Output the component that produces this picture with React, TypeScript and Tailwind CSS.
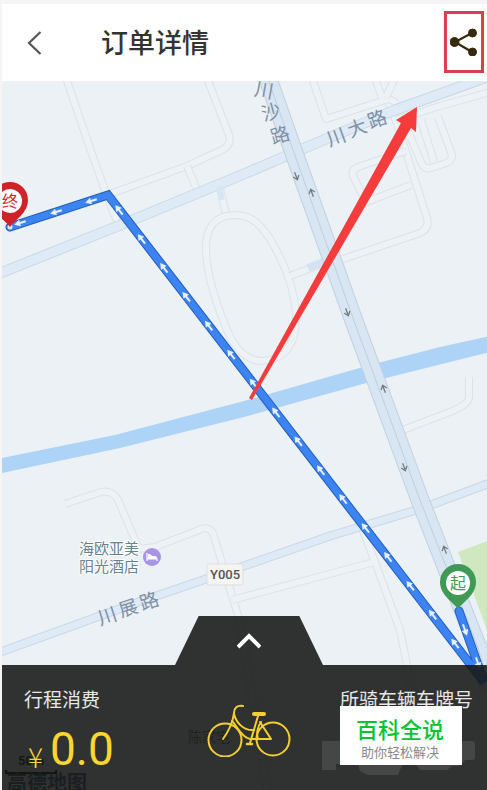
// src/App.tsx
import React from "react";

const MAP_FONT = '"Noto Sans CJK SC", sans-serif';

type RoadProps = { d: string; width: number; fill: string; edge: string };

// outlined road: edge stroke below, fill stroke on top
function Road({ d, width, fill, edge }: RoadProps) {
  return (
    <g fill="none" strokeLinejoin="round">
      <path d={d} stroke={edge} strokeWidth={width} />
      <path d={d} stroke={fill} strokeWidth={width - 2} />
    </g>
  );
}

const minorRoads = [
  "M66 78 L92 154 L107 196 L118 224",
  "M207 78 L229 135 Q232 145 222 150 L187 166 L110 194",
  "M187 166 L198 192",
  "M219 184 L226 214",
  "M235 215 C215 215 206 228 206 248 C206 275 217 305 225 325 C232 345 245 361 262 361 C284 360 297 345 296 315 C294 275 270 235 257 223 C250 217 243 215 235 215 Z",
  "M290 276 L322 264",
  "M340 260 L420 233 Q430 228 427 218 L397 124 Q393 114 388 101",
  "M411 185 L366 202 L354 178 Q350 170 358 167 L406 151",
  "M312 78 L326 119 L382 101 Q392 97 396 104 L401 114",
  "M375 78 L382 98 M395 78 L386 97",
  "M396 120 L440 106 L490 92",
  "M405 124 L421 162 Q424 170 431 168 L446 163 Q454 160 451 152 L438 117",
  "M421 120 L434 162",
  "M403 430 L455 410 Q468 404 469 398 L469 377",
  "M65 504 L98 493 Q111 488 118 500 L139 549 L155 547 L199 530 Q212 524 215 540 L240 622 L268 795",
  "M232 600 L374 562 M362 528 L375 562 L400 630 L412 690",
];

const localRoads = [
  { d: "M-2 274 L118 226 L244 174 L300 150 L395 110 L490 76", width: 11 },
  { d: "M-2 653 L130 605 L244 566 L330 536 L420 509 L490 483", width: 9 },
];

const HIGHWAY = "M267 76 L293 150 L354 321 L420 500 L478 648 L490 690";

// little travel arrows on the highway: x, y, rotation
const lanes = [
  [296, 176, 160],
  [312, 193, -20],
  [347, 312, 160],
  [384, 389, -20],
  [404, 467, 160],
  [445, 550, -20],
];

const routeArrows = [
  [20, 223, -107],
  [56, 212, -107],
  [91, 201, -107],
  ...Array.from({ length: 16 }, (_, i) => [119 + i * 22.4, 210 + i * 28.9, -38]),
  [465, 630, 160],
  [478, 663, 160],
];

function Pin({ x, y, color, label }: { x: number; y: number; color: string; label: string }) {
  return (
    <g transform={`translate(${x} ${y})`}>
      <path
        d="M0 26 C-5 19 -18 12 -18 -1 A18 18 0 0 1 18 -1 C18 12 5 19 0 26 Z"
        fill={color}
      />
      <circle r="12" fill="#fff" />
      <text y="6" textAnchor="middle" fontSize="16" fill={color}>
        {label}
      </text>
    </g>
  );
}

function RouteMap() {
  return (
    <svg
      className="absolute inset-0 h-full w-full"
      viewBox="2 81 485 709"
      preserveAspectRatio="xMidYMid slice"
      fontFamily={MAP_FONT}
      role="img"
      aria-label="行程路线"
    >
      <rect x="-500" y="-500" width="1500" height="2000" fill="#ebf1f5" />
      <path d="M458 552 L490 540 L490 638 Z" fill="#cfe8c0" />

      {minorRoads.map((d) => (
        <Road key={d} d={d} width={8} fill="#edf2f6" edge="#dde2e6" />
      ))}

      <path d="M2 458 L115 435 L244 401 L370 365 L440 347 L490 336 V352 L370 382 L244 417 L120 448 L2 473 Z" fill="#add3f6" />

      {localRoads.map((r) => (
        <Road key={r.d} d={r.d} width={r.width} fill="#deeaf5" edge="#cad8e5" />
      ))}
      <path d="M308 268 L324 262" stroke="#d3e3f3" strokeWidth="8" />
      <path d="M219 186 L222 200" stroke="#d9e6f2" strokeWidth="6" />
      <Road d={HIGHWAY} width={19} fill="#d8e6f3" edge="#c3d1df" />
      <path d={HIGHWAY} fill="none" stroke="#bccee1" strokeWidth="1" />
      {lanes.map(([x, y, r]) => (
        <path
          key={y}
          d="M0 4 V-3 M-3 0 L0 -4 L3 0"
          transform={`translate(${x} ${y}) rotate(${r})`}
          fill="none"
          stroke="#777b80"
          strokeWidth="1.3"
        />
      ))}

      {/* road names */}
      <g fontSize="19" fill="#8090a5" textAnchor="middle">
        <text transform="translate(264 90) rotate(10)" y="7">川</text>
        <text transform="translate(271 112) rotate(-16)" y="7">沙</text>
        <text transform="translate(280 135) rotate(-16)" y="7">路</text>
        <text transform="translate(336 137) rotate(-20)" y="7">川</text>
        <text transform="translate(357 128) rotate(-20)" y="7">大</text>
        <text transform="translate(377 119) rotate(-20)" y="7">路</text>
        <text transform="translate(107 616) rotate(-18)" y="7">川</text>
        <text transform="translate(128 608) rotate(-18)" y="7">展</text>
        <text transform="translate(149 601) rotate(-18)" y="7">路</text>
      </g>

      <g fontSize="15" fill="#66828f" stroke="#fff" strokeWidth="2" paintOrder="stroke">
        <text x="79" y="554">海欧亚美</text>
        <text x="79" y="572">阳光酒店</text>
      </g>
      <circle cx="152" cy="557" r="9" fill="#a794e4" />
      <path
        d="M147 553 V561 M147 559 H157 V561"
        fill="none"
        stroke="#fff"
        strokeWidth="1.2"
      />
      <path d="M148 557 V554 H150 L152 556 H155 Q157 556 157 559 H148 Z" fill="#fff" />

      <rect x="207" y="564" width="36" height="21" rx="2" fill="#f4f4f3" stroke="#dedfe0" />
      <text x="225" y="579" textAnchor="middle" fontSize="13" fontFamily="Roboto, sans-serif" fontWeight="500" fill="#555">
        Y005
      </text>

      {/* travelled route */}
      <g fill="none" strokeLinejoin="miter" strokeLinecap="round">
        <path d="M459 611 L484 682 L108 195 L10 227" stroke="#235dba" strokeWidth="9" />
        <path d="M459 611 L484 682 L108 195 L10 227" stroke="#3d84f3" strokeWidth="7" />
      </g>
      <circle cx="10" cy="227" r="2.5" fill="#d7e6fa" />
      {routeArrows.map(([x, y, r]) => (
        <path
          key={`${x}-${y}`}
          d="M0 -6 L3.500 0 H1 V6 H-1 V0 H-3.500 Z"
          transform={`translate(${x} ${y}) rotate(${r})`}
          fill="#e6f0ff"
        />
      ))}
      <Pin x={10} y={201} color="#cf2229" label="终" />
      <Pin x={458} y={583} color="#409a56" label="起" />

      {/* partly hidden by the trip panel */}
      <text x="188" y="742" fontSize="14" fill="#777">陈家宅</text>
      <text x="18" y="765" fontSize="13" fontFamily="Roboto, sans-serif" fontWeight="500" fill="#000">
        50m
      </text>
      <path d="M6 770 V773 H56 V770" fill="none" stroke="#000" strokeWidth="2" />
      <text x="7" y="790" fontSize="20" fontWeight="700" fill="#3c5a78">高德地图</text>

      <path d="M249 398 L401 123 L396 120 L417 107 L416 132 L411 128 L252 400 Z" fill="#f43c3c" />
    </svg>
  );
}

function BikeIcon() {
  return (
    <svg
      className="h-[54px] w-[84px]"
      viewBox="207 703 84 54"
      fill="none"
      stroke="#f4cf2e"
      strokeWidth="2"
      strokeLinecap="round"
      strokeLinejoin="round"
      aria-hidden="true"
    >
      <circle cx="225" cy="740" r="16.5" />
      <circle cx="273" cy="739" r="16.5" />
      <path d="M243 706 C237 705 234 708 234 713 C233 721 231 728 223 739" />
      <path d="M234 714 C236 722 243 731 254 730" />
      <path d="M232 721 C237 726 241 737 250 739 H271 L260 722" />
      <path d="M258 716 L250 743 M261 722 C258 726 256 733 258 739" />
      <path d="M254 714 H264" strokeWidth="4" />
      <path d="M247 744 H252" strokeWidth="2.5" />
    </svg>
  );
}

export default function App() {
  return (
    <div className="flex min-h-screen flex-col bg-[#f5f5f5] pt-1 pl-0.5 font-['Noto_Sans_CJK_SC',sans-serif]">
      <header className="flex h-[77px] items-center bg-white pr-[3px] pl-6">
        <button type="button" aria-label="返回" className="flex w-[75px] items-center">
          <svg className="h-6 w-4" viewBox="0 0 16 24" fill="none" stroke="#555" strokeWidth="2.2" aria-hidden="true">
            <path d="M14.500 1 L3 12 L14.500 23" />
          </svg>
        </button>
        <h1 className="flex-1 pb-0.5 text-[27px] leading-9 font-medium text-[#333]">订单详情</h1>
        <button
          type="button"
          aria-label="分享"
          className="mb-0.5 flex h-[62px] w-10 items-center justify-center border-3 border-[#d8404a]"
        >
          <svg className="h-7 w-7" viewBox="0 0 28 28" fill="#352a0b" stroke="#352a0b" aria-hidden="true">
            <path d="M22 5 L5 14 L22 24" fill="none" strokeWidth="2.2" />
            <circle cx="4.500" cy="14" r="4.500" />
            <circle cx="22.500" cy="5" r="4" />
            <circle cx="22.500" cy="24" r="4" />
          </svg>
        </button>
      </header>

      <main className="relative flex flex-1 flex-col justify-end overflow-hidden">
        <RouteMap />

        <section className="relative">
          <div className="flex justify-center pr-[13px] pl-[22px]">
            <button
              type="button"
              aria-label="展开"
              className="flex h-[49px] w-[148px] items-center justify-center bg-[#151714]/88 [clip-path:polygon(16%_0,84%_0,100%_100%,0_100%)]"
            >
              <svg className="h-4 w-6" viewBox="0 0 24 16" fill="none" stroke="#fff" strokeWidth="4" aria-hidden="true">
                <path d="M1 14 L12 3 L23 14" />
              </svg>
            </button>
          </div>

          <div className="grid h-[125px] grid-cols-[1fr_auto_1fr] bg-[#151714]/88 pt-5 pr-[14px] pl-[22px] text-white">
            <div>
              <p className="text-[19px] leading-7 text-[#e8e8e8]">行程消费</p>
              <p className="flex items-end pt-2 text-[#fbd531]">
                <span className="w-[26px] pl-1 font-['Noto_Sans_CJK_SC',sans-serif] text-[28px] leading-[42px] font-light">¥</span>
                <span className="font-[Roboto,sans-serif] text-[46px] leading-[56px]">0.0</span>
              </p>
            </div>

            <div className="pt-[18px]">
              <BikeIcon />
            </div>

            <div className="relative justify-self-end">
              <p className="text-[19px] leading-7 text-[#e8e8e8]">所骑车辆车牌号</p>
              <svg
                className="absolute top-[55px] -right-0.5 h-9 w-[153px]"
                viewBox="0 0 153 36"
                fill="#555"
                aria-hidden="true"
              >
                <path d="M0 1 H150 Q153 1 153 4 V17 Q153 20 150 20 H143 L139 26 H130 L125 30 H98 L94 25 H80 L76 35 H46 L38 31 L36 24 H14 V30 H0 Z" opacity="0.6" />
              </svg>
              <div className="absolute top-[21px] left-0 flex h-[59px] w-[122px] flex-col items-center bg-white pt-2.5 pr-0.5">
                <strong className="text-[22px] leading-6 font-medium text-[#08c431]">百科全说</strong>
                <span className="text-[13px] leading-6 text-[#888]">助你轻松解决</span>
              </div>
            </div>
          </div>
        </section>
      </main>
    </div>
  );
}
